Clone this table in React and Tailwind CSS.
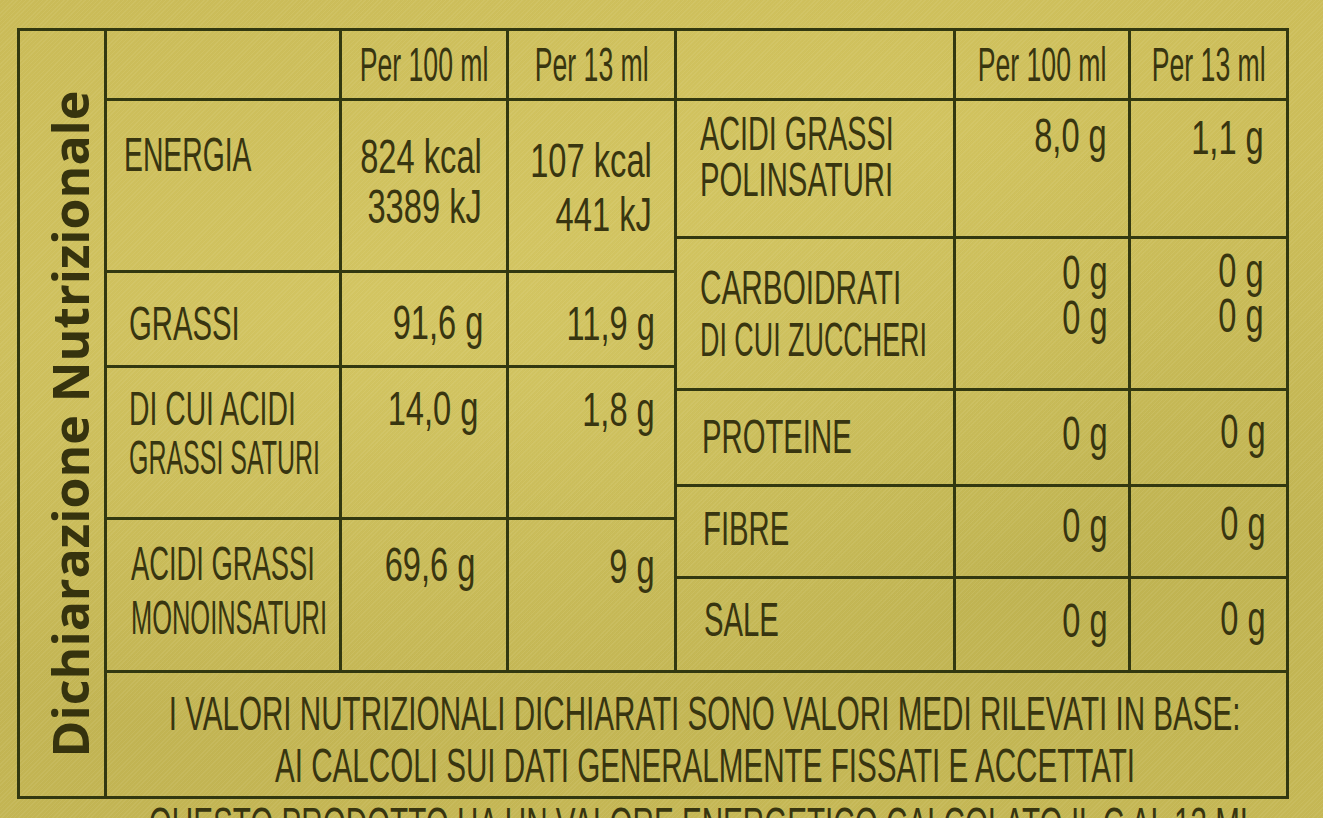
import React from "react";

const LINE = "border-[#323810]";

function Label({ lines, className = "", lh = "leading-[50px]" }) {
  return (
    <div className={`h-full pl-[17px] ${className}`}>
      <div className={`text-[48px] whitespace-nowrap ${lh}`}>
        {lines.map((l, i) => (
          <div key={i} className={`w-max origin-left ${l[1] || "scale-x-[0.60]"}`}>{l[0]}</div>
        ))}
      </div>
    </div>
  );
}

function Value({ lines, className = "", lh = "leading-[50px]" }) {
  return (
    <div className={`h-full flex justify-end ${className}`}>
      <div className={`w-max origin-right scale-x-[0.68] text-right text-[48px] whitespace-nowrap ${lh}`}>
        {lines.map((l, i) => (
          <div key={i}>{l}</div>
        ))}
      </div>
    </div>
  );
}

function Head({ text }) {
  return (
    <div className="h-full flex items-center justify-center">
      <div className="w-max origin-center scale-x-[0.555] text-[48px] leading-[50px] whitespace-nowrap">{text}</div>
    </div>
  );
}

export default function App() {
  return (
    <div className="w-[1323px] h-[818px] overflow-hidden relative bg-[#c9ba57] text-[#383510] font-['Liberation_Sans',Arial,sans-serif]">
      <div className="absolute inset-0 bg-[radial-gradient(ellipse_at_30%_40%,rgba(230,218,120,0.35),transparent_60%),radial-gradient(ellipse_at_80%_70%,rgba(150,150,60,0.2),transparent_55%),radial-gradient(ellipse_at_70%_15%,rgba(225,212,110,0.3),transparent_50%),radial-gradient(ellipse_at_10%_90%,rgba(170,160,70,0.25),transparent_40%)]" />
      <div className="absolute inset-0 bg-[repeating-linear-gradient(135deg,rgba(255,255,220,0.07)_0px,rgba(255,255,220,0.07)_1px,transparent_1px,transparent_3px)]" />
      <div className="relative pt-[28px] pl-[17px]">
        <div className={`w-[1272px] h-[771px] border-[3px] ${LINE} flex`}>
          {/* vertical band */}
          <div className={`w-[87px] shrink-0 border-r-[3px] ${LINE} flex items-center justify-center`}>
            <span className="-rotate-90 translate-x-[8px] translate-y-[10px] whitespace-nowrap font-['Open_Sans',sans-serif] font-bold text-[50px] leading-none text-[#36330e]">
              Dichiarazione Nutrizionale
            </span>
          </div>
          {/* main */}
          <div className="w-[1179px] min-w-0 shrink-0 flex flex-col">
            <div className="h-[639px] flex">
              {/* left half */}
              <div className="w-[570px] flex flex-col">
                <div className={`h-[70px] flex border-b-[3px] ${LINE}`}>
                  <div className={`w-[235px] border-r-[3px] ${LINE}`} />
                  <div className={`w-[167px] border-r-[3px] ${LINE}`}><Head text="Per 100 ml" /></div>
                  <div className={`w-[168px] border-r-[3px] ${LINE}`}><Head text="Per 13 ml" /></div>
                </div>
                <div className={`h-[172px] flex border-b-[3px] ${LINE}`}>
                  <div className={`w-[235px] border-r-[3px] ${LINE}`}><Label lines={[["ENERGIA", "scale-x-[0.59]"]]} className="pt-[29px] pl-[16px]" /></div>
                  <div className={`w-[167px] border-r-[3px] ${LINE}`}><Value lines={["824 kcal", "3389 kJ"]} className="pt-[31px] pr-[24px]" /></div>
                  <div className={`w-[168px] border-r-[3px] ${LINE}`}><Value lines={["107 kcal", "441 kJ"]} className="pt-[33px] pr-[22px]" lh="leading-[54px]" /></div>
                </div>
                <div className={`h-[95px] flex border-b-[3px] ${LINE}`}>
                  <div className={`w-[235px] border-r-[3px] ${LINE}`}><Label lines={[["GRASSI", "scale-x-[0.61]"]]} className="pt-[26px] pl-[22px]" /></div>
                  <div className={`w-[167px] border-r-[3px] ${LINE}`}><Value lines={["91,6 g"]} className="pt-[25px] pr-[23px]" /></div>
                  <div className={`w-[168px] border-r-[3px] ${LINE}`}><Value lines={["11,9 g"]} className="pt-[26px] pr-[19px]" /></div>
                </div>
                <div className={`h-[152px] flex border-b-[3px] ${LINE}`}>
                  <div className={`w-[235px] border-r-[3px] ${LINE}`}><Label lines={[["DI CUI ACIDI", "scale-x-[0.59]"], ["GRASSI SATURI", "scale-x-[0.52]"]]} className="pt-[16px] pl-[22px]" lh="leading-[49px]" /></div>
                  <div className={`w-[167px] border-r-[3px] ${LINE}`}><Value lines={["14,0 g"]} className="pt-[16px] pr-[28px]" /></div>
                  <div className={`w-[168px] border-r-[3px] ${LINE}`}><Value lines={["1,8 g"]} className="pt-[17px] pr-[19px]" /></div>
                </div>
                <div className="h-[150px] flex">
                  <div className={`w-[235px] border-r-[3px] ${LINE}`}><Label lines={[["ACIDI GRASSI", "scale-x-[0.57]"], ["MONOINSATURI", "scale-x-[0.53]"]]} className="pt-[17px] pl-[24px]" lh="leading-[54px]" /></div>
                  <div className={`w-[167px] border-r-[3px] ${LINE}`}><Value lines={["69,6 g"]} className="pt-[20px] pr-[31px]" /></div>
                  <div className={`w-[168px] border-r-[3px] ${LINE}`}><Value lines={["9 g"]} className="pt-[22px] pr-[19px]" /></div>
                </div>
              </div>
              {/* right half */}
              <div className="w-[609px] flex flex-col">
                <div className={`h-[70px] flex border-b-[3px] ${LINE}`}>
                  <div className={`w-[279px] border-r-[3px] ${LINE}`} />
                  <div className={`w-[175px] border-r-[3px] ${LINE}`}><Head text="Per 100 ml" /></div>
                  <div className="w-[155px]"><Head text="Per 13 ml" /></div>
                </div>
                <div className={`h-[138px] flex border-b-[3px] ${LINE}`}>
                  <div className={`w-[279px] border-r-[3px] ${LINE}`}><Label lines={[["ACIDI GRASSI"], ["POLINSATURI", "scale-x-[0.61]"]]} className="pt-[10px] pl-[23px]" lh="leading-[46px]" /></div>
                  <div className={`w-[175px] border-r-[3px] ${LINE}`}><Value lines={["8,0 g"]} className="pt-[10px] pr-[21px]" /></div>
                  <div className="w-[155px]"><Value lines={["1,1 g"]} className="pt-[12px] pr-[22px]" /></div>
                </div>
                <div className={`h-[152px] flex border-b-[3px] ${LINE}`}>
                  <div className={`w-[279px] border-r-[3px] ${LINE}`}><Label lines={[["CARBOIDRATI", "scale-x-[0.62]"], ["DI CUI ZUCCHERI", "scale-x-[0.56]"]]} className="pt-[23px] pl-[23px]" lh="leading-[52px]" /></div>
                  <div className={`w-[175px] border-r-[3px] ${LINE}`}><Value lines={["0 g", "0 g"]} className="pt-[11px] pr-[20px]" lh="leading-[45px]" /></div>
                  <div className="w-[155px]"><Value lines={["0 g", "0 g"]} className="pt-[9px] pr-[22px]" lh="leading-[45px]" /></div>
                </div>
                <div className={`h-[96px] flex border-b-[3px] ${LINE}`}>
                  <div className={`w-[279px] border-r-[3px] ${LINE}`}><Label lines={[["PROTEINE", "scale-x-[0.61]"]]} className="pt-[21px] pl-[25px]" /></div>
                  <div className={`w-[175px] border-r-[3px] ${LINE}`}><Value lines={["0 g"]} className="pt-[18px] pr-[20px]" /></div>
                  <div className="w-[155px]"><Value lines={["0 g"]} className="pt-[16px] pr-[20px]" /></div>
                </div>
                <div className={`h-[92px] flex border-b-[3px] ${LINE}`}>
                  <div className={`w-[279px] border-r-[3px] ${LINE}`}><Label lines={[["FIBRE", "scale-x-[0.61]"]]} className="pt-[17px] pl-[26px]" /></div>
                  <div className={`w-[175px] border-r-[3px] ${LINE}`}><Value lines={["0 g"]} className="pt-[14px] pr-[20px]" /></div>
                  <div className="w-[155px]"><Value lines={["0 g"]} className="pt-[12px] pr-[20px]" /></div>
                </div>
                <div className="h-[91px] flex">
                  <div className={`w-[279px] border-r-[3px] ${LINE}`}><Label lines={[["SALE", "scale-x-[0.61]"]]} className="pt-[16px] pl-[27px]" /></div>
                  <div className={`w-[175px] border-r-[3px] ${LINE}`}><Value lines={["0 g"]} className="pt-[17px] pr-[20px]" /></div>
                  <div className="w-[155px]"><Value lines={["0 g"]} className="pt-[15px] pr-[20px]" /></div>
                </div>
              </div>
            </div>
            {/* footer */}
            <div className={`flex-1 min-w-0 border-t-[3px] ${LINE} flex flex-col items-center pt-[15px]`}>
              <div className="w-max shrink-0 translate-x-[8px] origin-center scale-x-[0.617] text-[48px] leading-[52px] whitespace-nowrap">
                I VALORI NUTRIZIONALI DICHIARATI SONO VALORI MEDI RILEVATI IN BASE:
              </div>
              <div className="w-max shrink-0 translate-x-[8px] origin-center scale-x-[0.617] text-[48px] leading-[52px] whitespace-nowrap">
                AI CALCOLI SUI DATI GENERALMENTE FISSATI E ACCETTATI
              </div>
            </div>
          </div>
        </div>
        <div className="w-[1272px] flex justify-center pt-[0px]">
          <div className="w-max shrink-0 translate-x-[50px] origin-center scale-x-[0.617] text-[48px] leading-[52px] whitespace-nowrap">
            QUESTO PRODOTTO HA UN VALORE ENERGETICO CALCOLATO IL C AL 13 ML
          </div>
        </div>
      </div>
    </div>
  );
}
